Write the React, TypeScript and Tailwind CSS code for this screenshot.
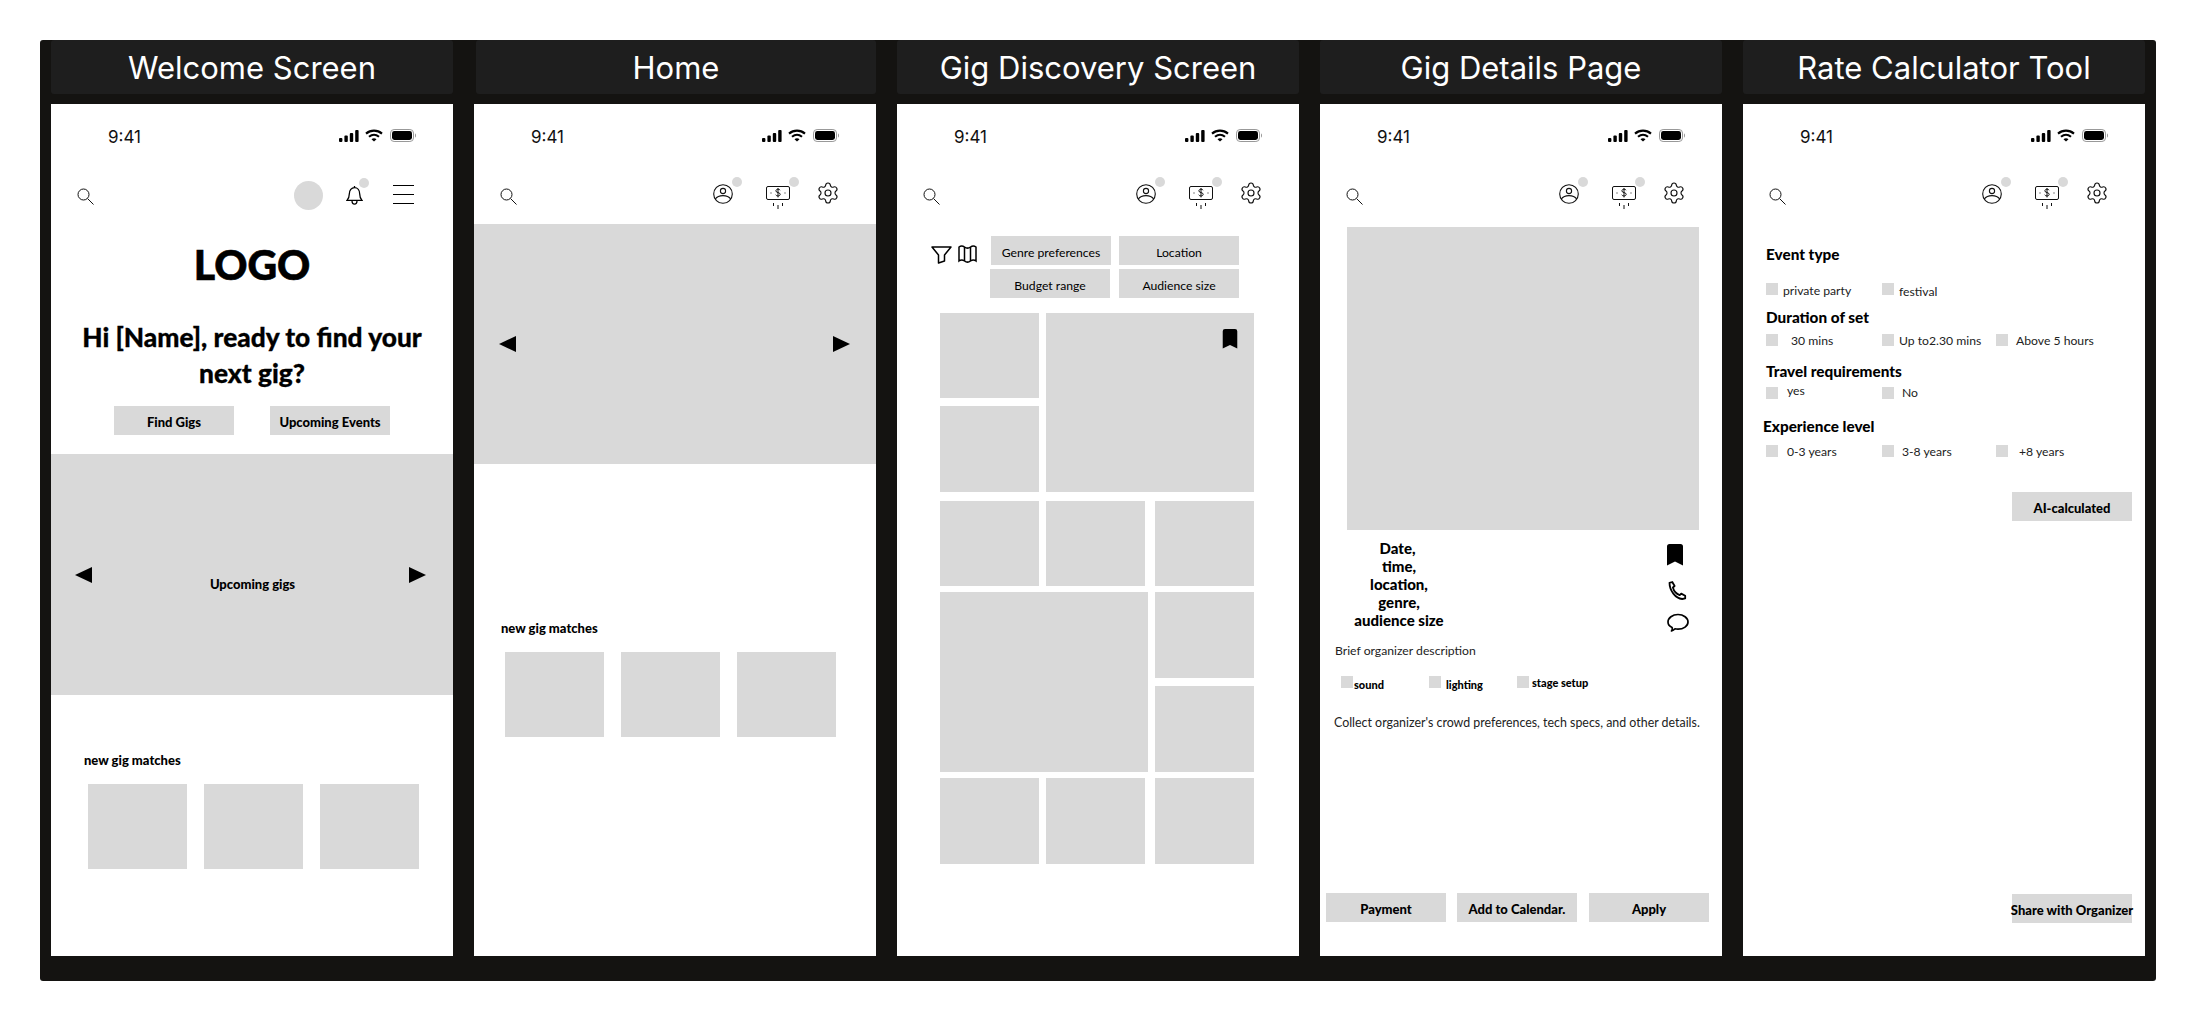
import type { ReactNode } from 'react'
import { Settings } from 'lucide-react'

const body = "font-['Lato','Noto_Sans',sans-serif]"

// ─── Icons ───────────────────────────────────────────────────────────────────

function SearchIcon() {
  return (
    <svg width="17" height="17" viewBox="0 0 17 17" fill="none" stroke="#111" strokeWidth="1" className="block">
      <circle cx="6.5" cy="6.5" r="5.5" />
      <path d="M10.6 10.6 16.5 16.5" />
    </svg>
  )
}

function StatusIcons() {
  return (
    <div className="flex items-center">
      <svg width="20" height="12" viewBox="0 0 20 12" fill="#000">
        <rect x="0" y="8" width="3.4" height="4" rx="1" />
        <rect x="5.4" y="5.5" width="3.4" height="6.5" rx="1" />
        <rect x="10.8" y="3" width="3.4" height="9" rx="1" />
        <rect x="16.2" y="0" width="3.4" height="12" rx="1" />
      </svg>
      <svg width="18" height="13" viewBox="0 0 18 13" fill="none" stroke="#000" strokeWidth="2.1" className="ml-[6px]">
        <path d="M1 4.6C5.6.6 12.4.6 17 4.6" />
        <path d="M4 7.8c3-2.5 7-2.5 10 0" />
        <path d="M9 12.6 6.5 10.2c1.5-1.2 3.5-1.2 5 0Z" fill="#000" stroke="none" />
      </svg>
      <svg width="26" height="13" viewBox="0 0 26 13" className="ml-[7px]">
        <rect x="0.5" y="0.5" width="23" height="12" rx="3.6" fill="none" stroke="#999" />
        <rect x="2" y="2" width="20" height="9" rx="2.4" fill="#000" />
        <path d="M25 4.5c.8.3 1 1.2 1 2s-.2 1.700-1 2Z" fill="#999" />
      </svg>
    </div>
  )
}

function BellIcon() {
  return (
    <svg width="17" height="21" viewBox="0 0 17 21" fill="none" stroke="#000" strokeWidth="1.3" className="block">
      <path d="M8.500 1v1.600M3.300 9c0-3.700 2.200-6.400 5.200-6.400s5.200 2.700 5.200 6.400c0 3.400 1 5 2.300 6.400H1c1.300-1.400 2.300-3 2.300-6.400Z" />
      <path d="M6 15.500c0 2.500 1 3.700 2.500 3.700s2.500-1.200 2.500-3.700" />
    </svg>
  )
}

function ProfileIcon() {
  return (
    <svg width="20" height="20" viewBox="0 0 20 20" fill="none" stroke="#111" strokeWidth="1.1" className="block">
      <circle cx="10" cy="10" r="9.300" />
      <circle cx="10" cy="7" r="2.600" />
      <path d="M2.400 15c1.500-2.300 4-3.400 7.600-3.400s6.100 1.100 7.600 3.400" />
    </svg>
  )
}

function MoneyIcon() {
  return (
    <svg width="24" height="25" viewBox="0 0 24 25" fill="none" stroke="#111" strokeWidth="1" className="block">
      <rect x="0.500" y="1.500" width="23" height="13" rx="1.500" />
      <path d="M14.200 5.300C13.700 4.500 13 4.200 12 4.200c-1.300 0-2.100.7-2.100 1.700 0 2.300 4.300 1.100 4.300 3.400 0 1-.9 1.700-2.200 1.700-1 0-1.800-.4-2.300-1.200M12 3v9.400" />
      <path d="M4.500 8h1M18.500 8h1M7.500 18v3M12 20v4M16.500 18v3" />
    </svg>
  )
}

function BookmarkIcon({ w, h }: { w: number; h: number }) {
  return (
    <svg width={w} height={h} viewBox="0 0 16 22" fill="#000" className="block">
      <path d="M2.500 0h11A2.500 2.500 0 0 1 16 2.500V21.500L8 17.500 0 21.500V2.500A2.500 2.500 0 0 1 2.500 0Z" />
    </svg>
  )
}

function Triangle({ left }: { left?: boolean }) {
  return (
    <svg width="17" height="16" viewBox="0 0 17 16" fill="#000" className="block">
      <polygon points={left ? '17,0 17,16 0,8' : '0,0 0,16 17,8'} />
    </svg>
  )
}

// ─── Shared bits ─────────────────────────────────────────────────────────────

function Dot({ className }: { className: string }) {
  return <span className={`absolute w-[10px] h-[10px] rounded-full bg-[#d9d9d9] ${className}`} />
}

function StatusBar() {
  return (
    <div className="h-[76px] pt-[22px] pl-[57px] pr-[37px] flex items-start justify-between">
      <span className="font-['Inter',sans-serif] text-[17px] leading-[22px] text-[#111]">9:41</span>
      <div className="mt-[3px]">
        <StatusIcons />
      </div>
    </div>
  )
}

function TopBar() {
  return (
    <div className="h-[44px] flex items-start pl-[26px] relative">
      <div className="mt-[8px]"><SearchIcon /></div>
      <div className="ml-[196px] mt-[4px] relative">
        <ProfileIcon />
        <Dot className="-top-[7px] -right-[9px]" />
      </div>
      <div className="ml-[33px] mt-[5px] relative">
        <MoneyIcon />
        <Dot className="-top-[8px] -right-[9px]" />
      </div>
      <div className="ml-[26px] mt-[1px]">
        <Settings size={24} strokeWidth={1.15} color="#111" />
      </div>
    </div>
  )
}

function WelcomeBar() {
  return (
    <div className="h-[44px] flex items-start pl-[26px]">
      <div className="mt-[8px]"><SearchIcon /></div>
      <div className="ml-[200px] mt-[1px] w-[29px] h-[29px] rounded-full bg-[#d9d9d9]" />
      <div className="ml-[23px] mt-[5px] relative">
        <BellIcon />
        <Dot className="-top-[7px] -right-[6px]" />
      </div>
      <div className="ml-[30px] mt-[5px] w-[21px] flex flex-col gap-[8px]">
        <span className="h-px bg-black" />
        <span className="h-px bg-black" />
        <span className="h-px bg-black" />
      </div>
    </div>
  )
}

function Btn({ label, className = '', bold = true }: { label: string; className?: string; bold?: boolean }) {
  return (
    <div className={`w-[120px] h-[29px] bg-[#d9d9d9] flex items-center justify-center whitespace-nowrap pt-[5px] text-black ${bold ? 'font-black text-[13px]' : 'text-[12.2px] text-[#222]'} ${className}`}>
      {label}
    </div>
  )
}

function Matches() {
  return (
    <div className="flex gap-[17px]">
      <div className="w-[99px] h-[85px] bg-[#d9d9d9]" />
      <div className="w-[99px] h-[85px] bg-[#d9d9d9]" />
      <div className="w-[99px] h-[85px] bg-[#d9d9d9]" />
    </div>
  )
}

function Tile({ className = 'w-[99px] h-[85px]', children }: { className?: string; children?: ReactNode }) {
  return <div className={`bg-[#d9d9d9] ${className}`}>{children}</div>
}

function Check({ label, className = '', textClass = '' }: { label: string; className?: string; textClass?: string }) {
  return (
    <div className={`flex items-start ${className}`}>
      <span className="w-[12px] h-[12px] bg-[#d9d9d9] shrink-0" />
      <span className={`whitespace-nowrap text-[#222] text-[12.2px] leading-[16px] ${textClass}`}>{label}</span>
    </div>
  )
}

// ─── Screens ─────────────────────────────────────────────────────────────────

function WelcomeScreen() {
  return (
    <>
      <StatusBar />
      <WelcomeBar />
      <div className="text-center font-black text-[41px] leading-[48px] text-black mt-[17px] [-webkit-text-stroke:0.6px_black]">LOGO</div>
      <div className="text-center font-black text-[26.3px] leading-[36px] text-black mt-[30px] px-[20px] [-webkit-text-stroke:0.3px_black]">
        Hi [Name], ready to find your next gig?
      </div>
      <div className="flex pl-[63px] gap-[36px] mt-[15px]">
        <Btn label="Find Gigs" />
        <Btn label="Upcoming Events" />
      </div>
      <div className="h-[241px] bg-[#d9d9d9] mt-[19px] flex items-center justify-between pl-[24px] pr-[27px]">
        <Triangle left />
        <span className="text-[13px] font-black text-black mt-[20px] ml-[4px]">Upcoming gigs</span>
        <Triangle />
      </div>
      <div className="pl-[33px] text-[13px] leading-[18px] font-black text-black mt-[56px]">new gig matches</div>
      <div className="pl-[37px] mt-[15px]"><Matches /></div>
    </>
  )
}

function HomeScreen() {
  return (
    <>
      <StatusBar />
      <TopBar />
      <div className="h-[240px] bg-[#d9d9d9] flex items-center justify-between pl-[25px] pr-[26px]">
        <Triangle left />
        <Triangle />
      </div>
      <div className="pl-[27px] text-[13px] leading-[18px] font-black text-black mt-[155px]">new gig matches</div>
      <div className="pl-[31px] mt-[15px]"><Matches /></div>
    </>
  )
}

function DiscoveryScreen() {
  return (
    <>
      <StatusBar />
      <TopBar />
      <div className="flex pl-[34px] mt-[12px]">
        <svg width="21" height="18" viewBox="0 0 21 18" fill="none" stroke="#000" strokeWidth="1.500" className="mt-[10px]">
          <path d="M1 1h19l-6.500 8v6l-6 2V9Z" strokeLinejoin="round" />
        </svg>
        <svg width="19" height="19" viewBox="0 0 19 19" fill="none" stroke="#000" strokeWidth="1.500" className="ml-[6px] mt-[8px]">
          <path d="M1 3c2-1.500 3.500-1.500 5.500 0s4 1.500 6 0 3.500-1.500 5.500 0v14c-2-1.500-3.500-1.500-5.500 0s-4 1.500-6 0-3.500-1.500-5.500 0Z" />
          <path d="M6.500 3v14M12.500 3v14" />
        </svg>
        <div className="ml-[14px] flex flex-col gap-[4px]">
          <div className="flex gap-[8px]">
            <Btn label="Genre preferences" bold={false} />
            <Btn label="Location" bold={false} />
          </div>
          <div className="flex gap-[9px] -ml-px">
            <Btn label="Budget range" bold={false} />
            <Btn label="Audience size" bold={false} />
          </div>
        </div>
      </div>
      <div className="pl-[43px] mt-[15px] w-fit">
        <div className="flex gap-[7px]">
          <div className="flex flex-col gap-[8px]">
            <Tile className="w-[99px] h-[85px]" />
            <Tile className="w-[99px] h-[86px]" />
          </div>
          <Tile className="w-[208px] h-[179px] flex justify-end pt-[16px] pr-[16px]">
            <BookmarkIcon w={16} h={20} />
          </Tile>
        </div>
        <div className="flex gap-[7px] mt-[9px]">
          <Tile />
          <Tile />
          <Tile className="w-[99px] h-[85px] ml-[3px]" />
        </div>
        <div className="flex gap-[7px] mt-[6px]">
          <Tile className="w-[208px] h-[180px]" />
          <div className="flex flex-col gap-[8px]">
            <Tile className="w-[99px] h-[86px]" />
            <Tile className="w-[99px] h-[86px]" />
          </div>
        </div>
        <div className="flex gap-[7px] mt-[6px]">
          <Tile className="w-[99px] h-[86px]" />
          <Tile className="w-[99px] h-[86px]" />
          <Tile className="w-[99px] h-[86px] ml-[3px]" />
        </div>
      </div>
    </>
  )
}

function DetailsScreen() {
  return (
    <div className="flex flex-col h-full">
      <StatusBar />
      <TopBar />
      <Tile className="w-[352px] h-[303px] ml-[27px] mt-[3px]" />
      <div className="flex justify-between items-start pl-[38px] pr-[33px] mt-[9px]">
        <div className="w-[82px] text-center font-black text-[15px] leading-[18px] text-black">
          <div className="-ml-[3px]">Date,</div>
          <div>time,</div>
          <div>location,</div>
          <div className="-ml-[0px]">genre,</div>
          <div className="whitespace-nowrap -mx-[4px]">audience size</div>
        </div>
        <div className="flex flex-col items-start mt-[5px]">
          <BookmarkIcon w={16} h={22} />
          <svg width="19" height="19" viewBox="0 0 19 19" fill="none" stroke="#000" strokeWidth="1.800" className="mt-[15px] ml-px">
            <path d="M1.500 1.800 4.300 1l2.300 4-1.700 1.500c.9 3.500 3.500 6.400 6.800 7.600l1.500-1.500 4 2.200v2.600l-3 .6C7.500 17.500 1.500 9.500 1.500 1.800Z" strokeLinejoin="round" />
          </svg>
          <svg width="22" height="19" viewBox="0 0 22 19" fill="none" stroke="#000" strokeWidth="1.700" className="mt-[13px]">
            <path d="M4.500 18c.8-1.200 1-2.300.6-3.400C2.500 13.300 1 11.300 1 9c0-4 4.500-7.500 10-7.500S21 5 21 9s-4.500 7.200-10 7.200c-1 0-2-.1-3-.4-1 1.100-2.100 1.800-3.500 2.200Z" strokeLinejoin="round" />
          </svg>
        </div>
      </div>
      <div className="pl-[15px] text-[12.2px] leading-[16px] text-[#222] mt-[11px]">Brief organizer description</div>
      <div className="flex pl-[21px] mt-[17px] text-black">
        <Check label="sound" className="w-[88px]" textClass="font-black !text-[11px] !text-black ml-px mt-px" />
        <Check label="lighting" className="w-[88px]" textClass="font-black !text-[11px] !text-black ml-[5px] mt-px" />
        <Check label="stage setup" textClass="font-black !text-[11px] !text-black ml-[3px] -mt-px" />
      </div>
      <div className="pl-[14px] text-[12.4px] leading-[16px] text-[#222] whitespace-nowrap mt-[22px]">
        Collect organizer's crowd preferences, tech specs, and other details.
      </div>
      <div className="flex pl-[6px] gap-[11px] mt-[162px]">
        <Btn label="Payment" />
        <Btn label="Add to Calendar." />
        <Btn label="Apply" className="ml-px" />
      </div>
    </div>
  )
}

function Heading({ label, className = '' }: { label: string; className?: string }) {
  return <div className={`font-black text-[15.3px] leading-[18px] text-black pl-[23px] ${className}`}>{label}</div>
}

function CalculatorScreen() {
  return (
    <div className="flex flex-col h-full">
      <StatusBar />
      <TopBar />
      <Heading label="Event type" className="mt-[21px]" />
      <div className="flex pl-[23px] mt-[20px]">
        <Check label="private party" className="w-[116px]" textClass="ml-[5px]" />
        <Check label="festival" textClass="ml-[5px] mt-px" />
      </div>
      <Heading label="Duration of set" className="mt-[8px]" />
      <div className="flex pl-[23px] mt-[8px]">
        <Check label="30 mins" className="w-[116px]" textClass="ml-[13px] -mt-px" />
        <Check label="Up to2.30 mins" className="w-[114px]" textClass="ml-[5px] -mt-px" />
        <Check label="Above 5 hours" textClass="ml-[8px] -mt-px" />
      </div>
      <Heading label="Travel requirements" className="mt-[13px]" />
      <div className="flex pl-[23px] mt-[7px]">
        <Check label="yes" className="w-[116px]" textClass="ml-[9px] -mt-[4px]" />
        <Check label="No" textClass="ml-[8px] -mt-[2px]" />
      </div>
      <Heading label="Experience level" className="mt-[16px] !pl-[20px]" />
      <div className="flex pl-[23px] mt-[10px]">
        <Check label="0-3 years" className="w-[116px]" textClass="ml-[9px] -mt-px" />
        <Check label="3-8 years" className="w-[114px]" textClass="ml-[8px] -mt-px" />
        <Check label="+8 years" textClass="ml-[11px] -mt-px" />
      </div>
      <div className="flex justify-end pr-[13px] mt-[32px]">
        <Btn label="AI-calculated" />
      </div>
      <div className="flex justify-end pr-[13px] mt-[373px]">
        <Btn label="Share with Organizer" />
      </div>
    </div>
  )
}

const SCREENS: { title: string; screen: ReactNode; tab?: string }[] = [
  { title: 'Welcome Screen', screen: <WelcomeScreen /> },
  { title: 'Home', screen: <HomeScreen />, tab: 'ml-[2px]' },
  { title: 'Gig Discovery Screen', screen: <DiscoveryScreen /> },
  { title: 'Gig Details Page', screen: <DetailsScreen /> },
  { title: 'Rate Calculator Tool', screen: <CalculatorScreen /> },
]

export default function App() {
  return (
    <div className="w-[2196px] h-[1021px] bg-white pt-[40px] pl-[40px] overflow-hidden">
      <div className={`w-[2116px] h-[941px] bg-[#141311] rounded-[3px] px-[11px] flex gap-[21px] ${body}`}>
        {SCREENS.map(({ title, screen, tab = '' }) => (
          <div key={title} className="w-[402px]">
            <div className={`h-[54px] pt-[2px] bg-[#1e1e1e] rounded-[3px] flex items-center justify-center font-['Inter',sans-serif] text-[31px] text-white ${tab}`}>
              {title}
            </div>
            <div className="h-[852px] mt-[10px] bg-white overflow-hidden">{screen}</div>
          </div>
        ))}
      </div>
    </div>
  )
}
